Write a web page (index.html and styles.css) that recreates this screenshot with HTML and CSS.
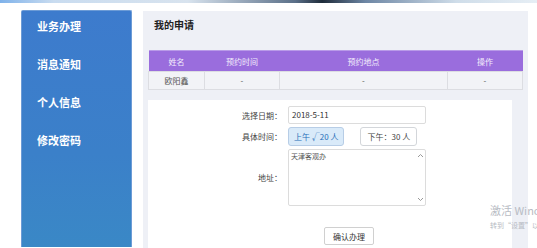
FILE: index.html
```html
<!DOCTYPE html>
<html lang="zh">
<head>
<meta charset="utf-8">
<link rel="stylesheet" href="styles.css">
</head>
<body>
<div class="topbar"></div>
<div class="layout">
  <nav class="sidebar">
    <a class="nav-item">业务办理</a>
    <a class="nav-item">消息通知</a>
    <a class="nav-item">个人信息</a>
    <a class="nav-item">修改密码</a>
  </nav>
  <main class="main">
    <h2 class="title">我的申请</h2>
    <table class="apply-table">
      <colgroup>
        <col class="c1"><col class="c2"><col class="c3"><col class="c4">
      </colgroup>
      <thead>
        <tr><th>姓名</th><th>预约时间</th><th>预约地点</th><th>操作</th></tr>
      </thead>
      <tbody>
        <tr><td>欧阳鑫</td><td>-</td><td>-</td><td>-</td></tr>
      </tbody>
    </table>
    <section class="form-panel">
      <div class="row">
        <label class="lbl">选择日期：</label>
        <div class="input">2018-5-11</div>
      </div>
      <div class="row">
        <label class="lbl">具体时间：</label>
        <div class="times">
          <button class="time active">上午 √20 人</button>
          <button class="time">下午：30 人</button>
        </div>
      </div>
      <div class="row row-area">
        <label class="lbl">地址：</label>
        <div class="textarea">
          <span>天津客观办</span>
          <div class="scroll">
            <svg width="7" height="5" viewBox="0 0 7 5"><path d="M1 4 L3.5 1.5 L6 4" fill="none" stroke="#999" stroke-width="1"/></svg>
            <svg width="7" height="5" viewBox="0 0 7 5"><path d="M1 1 L3.5 3.5 L6 1" fill="none" stroke="#999" stroke-width="1"/></svg>
          </div>
        </div>
      </div>
      <div class="submit-row">
        <button class="submit">确认办理</button>
      </div>
    </section>
  </main>
</div>
<div class="watermark">
  <div class="wm1">激活 Windows</div>
  <div class="wm2">转到“设置”以激活 Windows。</div>
</div>
</body>
</html>
```
FILE: styles.css
```css
html, body {
  margin: 0;
  padding: 0;
  background: #fff;
  font-family: "Noto Sans CJK SC", "Noto Sans", sans-serif;
  overflow: hidden;
  height: 248px;
}
.topbar {
  height: 3px;
  background: linear-gradient(90deg, #7fb2ea 0%, #c9dcf0 10%, #d8e3ee 35%, #5a6f88 55%, #1e2b3a 60%, #6d86a4 68%, #cfdde9 85%, #e6eef5 100%);
}
.layout {
  display: flex;
  align-items: flex-start;
  padding-left: 21px;
  padding-top: 7px;
}
.sidebar {
  width: 109px;
  height: 229px;
  border: 1px solid #6c9bd6;
  border-bottom: 0;
  border-radius: 2px 2px 0 0;
  background: linear-gradient(180deg, #3d7bcd 0%, #3b80c9 60%, #3a88c6 100%);
  display: flex;
  flex-direction: column;
  padding-top: 7px;
  box-sizing: content-box;
}
.nav-item {
  color: #fff;
  font-weight: bold;
  font-size: 11px;
  line-height: 16px;
  height: 38px;
  padding-left: 15px;
  display: block;
}
.main {
  margin-left: 11px;
  margin-top: 1px;
  width: 385px;
  height: 237px;
  background: #eef0f6;
  padding: 0 6px 0 5px;
  box-sizing: border-box;
}
.title {
  margin: 0;
  font-size: 10px;
  font-weight: bold;
  color: #222;
  line-height: 14px;
  padding: 7px 0 0 6px;
  height: 39px;
  box-sizing: border-box;
}
.apply-table {
  width: 374px;
  border-collapse: collapse;
  table-layout: fixed;
  font-size: 8px;
}
.c1 { width: 56px; }
.c2 { width: 75px; }
.c3 { width: 168px; }
.c4 { width: 75px; }
.apply-table th {
  background: #9a6ddd;
  color: #f3eefc;
  font-weight: normal;
  height: 20px;
  padding: 0;
  border-top: 1px solid #b99be8;
}
.apply-table td {
  background: #f2f3f7;
  color: #555;
  height: 17px;
  padding: 0;
  text-align: center;
  border: 1px solid #dcdde2;
}
.form-panel {
  margin-top: 10px;
  width: 364px;
  background: #fff;
  padding-top: 6px;
  height: 150px;
  box-sizing: border-box;
}
.row {
  display: flex;
  align-items: center;
  margin-bottom: 3px;
}
.lbl {
  width: 134px;
  text-align: right;
  font-size: 8px;
  color: #444;
  margin-right: 6px;
}
.input {
  width: 138px;
  height: 18px;
  box-sizing: border-box;
  border: 1px solid #dcdcdc;
  border-radius: 2px;
  font-size: 8px;
  color: #333;
  padding-left: 3px;
  line-height: 16px;
}
.times {
  display: flex;
  gap: 16px;
}
.time {
  font-family: inherit;
  font-size: 8px;
  height: 19px;
  padding: 0 6px;
  border: 1px solid #d3d6da;
  border-radius: 3px;
  background: #fff;
  color: #444;
  margin: 0;
  line-height: 17px;
}
.time.active {
  background: #d9eaf9;
  border-color: #b7cde6;
  color: #2a6fb8;
  padding: 0 5px;
}
.row-area {
  margin-bottom: 0;
}
.textarea {
  width: 138px;
  height: 57px;
  box-sizing: border-box;
  border: 1px solid #dcdcdc;
  border-radius: 2px;
  font-size: 7px;
  color: #555;
  padding: 1px 2px;
  position: relative;
  line-height: 10px;
}
.scroll {
  position: absolute;
  right: 1px;
  top: 3px;
  bottom: 3px;
  display: flex;
  flex-direction: column;
  justify-content: space-between;
}
.scroll svg { display: block; }
.submit-row {
  display: flex;
  padding-left: 176px;
  margin-top: 21px;
}
.submit {
  font-family: inherit;
  font-size: 8px;
  width: 50px;
  height: 18px;
  border: 1px solid #d0d0d0;
  border-radius: 2px;
  background: #fff;
  color: #333;
  padding: 0;
}
.watermark {
  position: absolute;
  left: 490px;
  top: 203px;
  white-space: nowrap;
  color: #b8bcc4;
}
.wm1 { font-size: 11px; line-height: 14px; }
.wm2 { font-size: 7px; line-height: 10px; margin-top: 3px; }
```
